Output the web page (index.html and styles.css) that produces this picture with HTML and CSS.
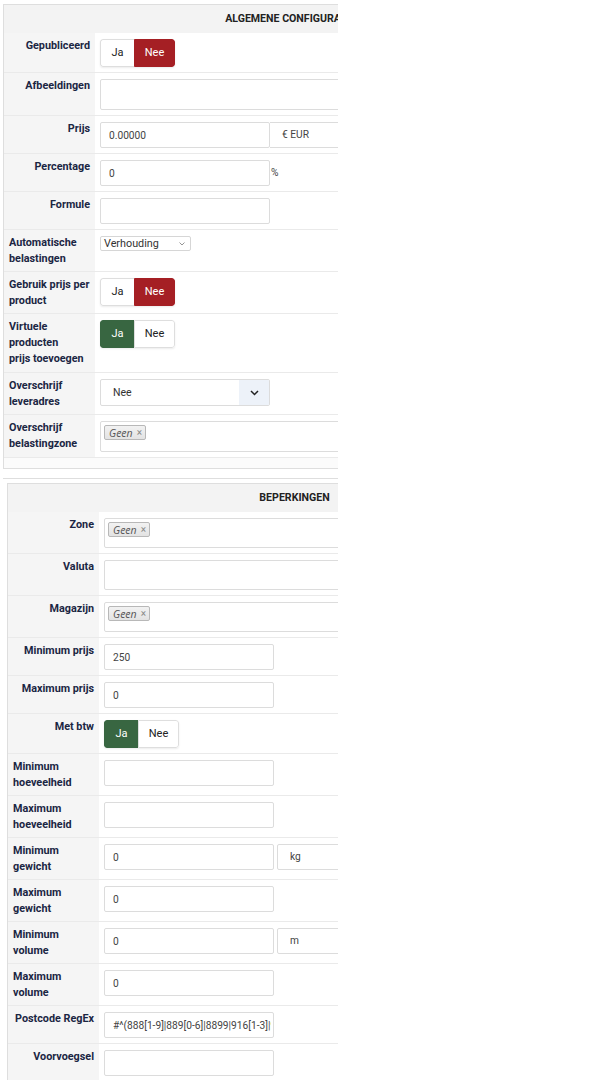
FILE: index.html
```html
<!DOCTYPE html>
<html lang="nl">
  <head>
    <meta charset="UTF-8" />
    <meta name="viewport" content="width=device-width, initial-scale=1.0" />
    <title>Verzendmethode bewerken</title>
    <link rel="stylesheet" href="styles.css">
  </head>
  <body>
    <div class="frame">
      <!-- Algemene configuratie -->
      <div class="panel panel-main">
        <div class="panel-title">Algemene configuratie</div>

        <div class="row">
          <div class="key"><label>Gepubliceerd</label></div>
          <div class="value">
            <div class="toggle">
              <span class="opt opt-ja">Ja</span>
              <span class="opt opt-nee is-no">Nee</span>
            </div>
          </div>
        </div>

        <div class="row">
          <div class="key"><label>Afbeeldingen</label></div>
          <div class="value"><div class="box-wide"></div></div>
        </div>

        <div class="row">
          <div class="key"><label>Prijs</label></div>
          <div class="value">
            <input class="field" type="text" value="0.00000" />
            <span class="addon">€ EUR</span>
          </div>
        </div>

        <div class="row">
          <div class="key"><label>Percentage</label></div>
          <div class="value">
            <input class="field" type="text" value="0" />
            <span class="unit">%</span>
          </div>
        </div>

        <div class="row">
          <div class="key"><label>Formule</label></div>
          <div class="value"><input class="field" type="text" value="" /></div>
        </div>

        <div class="row">
          <div class="key"><label>Automatische belastingen</label></div>
          <div class="value">
            <div class="mini-select">
              <span>Verhouding</span>
              <svg width="6" height="4" viewBox="0 0 6 4"><path d="M0.5 0.5 L3 3 L5.5 0.5" fill="none" stroke="#888" stroke-width="0.9"/></svg>
            </div>
          </div>
        </div>

        <div class="row">
          <div class="key"><label>Gebruik prijs per product</label></div>
          <div class="value">
            <div class="toggle">
              <span class="opt opt-ja">Ja</span>
              <span class="opt opt-nee is-no">Nee</span>
            </div>
          </div>
        </div>

        <div class="row">
          <div class="key key-tall"><label>Virtuele producten prijs&nbsp;toevoegen</label></div>
          <div class="value">
            <div class="toggle">
              <span class="opt opt-ja is-yes">Ja</span>
              <span class="opt opt-nee">Nee</span>
            </div>
          </div>
        </div>

        <div class="row">
          <div class="key"><label>Overschrijf leveradres</label></div>
          <div class="value">
            <div class="select">
              <span class="select-text">Nee</span>
              <span class="select-arrow">
                <svg width="9" height="6" viewBox="0 0 9 6"><path d="M1 1 L4.5 4.5 L8 1" fill="none" stroke="#222" stroke-width="1.5"/></svg>
              </span>
            </div>
          </div>
        </div>

        <div class="row">
          <div class="key"><label>Overschrijf belastingzone</label></div>
          <div class="value">
            <div class="chosen"><span class="tag"><em>Geen</em><span class="x">×</span></span></div>
          </div>
        </div>
      </div>

      <!-- Beperkingen -->
      <div class="group">
        <div class="panel">
          <div class="panel-title">Beperkingen</div>

          <div class="row">
            <div class="key"><label>Zone</label></div>
            <div class="value">
              <div class="chosen"><span class="tag"><em>Geen</em><span class="x">×</span></span></div>
            </div>
          </div>

          <div class="row">
            <div class="key"><label>Valuta</label></div>
            <div class="value"><div class="box-wide"></div></div>
          </div>

          <div class="row">
            <div class="key"><label>Magazijn</label></div>
            <div class="value">
              <div class="chosen"><span class="tag"><em>Geen</em><span class="x">×</span></span></div>
            </div>
          </div>

          <div class="row">
            <div class="key"><label>Minimum prijs</label></div>
            <div class="value"><input class="field" type="text" value="250" /></div>
          </div>

          <div class="row">
            <div class="key"><label>Maximum prijs</label></div>
            <div class="value"><input class="field" type="text" value="0" /></div>
          </div>

          <div class="row">
            <div class="key"><label>Met btw</label></div>
            <div class="value">
              <div class="toggle">
                <span class="opt opt-ja is-yes">Ja</span>
                <span class="opt opt-nee">Nee</span>
              </div>
            </div>
          </div>

          <div class="row">
            <div class="key"><label>Minimum hoeveelheid</label></div>
            <div class="value"><input class="field" type="text" value="" /></div>
          </div>

          <div class="row">
            <div class="key"><label>Maximum hoeveelheid</label></div>
            <div class="value"><input class="field" type="text" value="" /></div>
          </div>

          <div class="row">
            <div class="key"><label>Minimum gewicht</label></div>
            <div class="value">
              <input class="field" type="text" value="0" />
              <span class="unit-box">kg</span>
            </div>
          </div>

          <div class="row">
            <div class="key"><label>Maximum gewicht</label></div>
            <div class="value"><input class="field" type="text" value="0" /></div>
          </div>

          <div class="row">
            <div class="key"><label>Minimum volume</label></div>
            <div class="value">
              <input class="field" type="text" value="0" />
              <span class="unit-box">m</span>
            </div>
          </div>

          <div class="row">
            <div class="key"><label>Maximum volume</label></div>
            <div class="value"><input class="field" type="text" value="0" /></div>
          </div>

          <div class="row">
            <div class="key"><label>Postcode RegEx</label></div>
            <div class="value">
              <input class="field" type="text" value="#^(888[1-9]|889[0-6]|8899|916[1-3]|9170|9171|9172)[0-9]{2}$#" />
            </div>
          </div>

          <div class="row">
            <div class="key"><label>Voorvoegsel</label></div>
            <div class="value"><input class="field" type="text" value="" /></div>
          </div>
        </div>
      </div>
    </div>
  </body>
</html>
```

FILE: styles.css
```css
* {
  box-sizing: border-box;
}

body {
  margin: 0;
  background: #ffffff;
  font-family: Roboto, "Liberation Sans", sans-serif;
  font-size: 10.5px;
  color: #333333;
}

.frame {
  width: 338px;
  overflow: hidden;
  padding-top: 4px;
}

.panel {
  width: 575px;
  border: 1px solid #dedede;
  background: #ffffff;
}

.panel-main {
  margin-left: 3px;
  padding-bottom: 10px;
  background: #fbfbfb;
}

.panel-title {
  height: 28px;
  line-height: 28px;
  background: #f3f3f3;
  text-align: center;
  font-size: 10.6px;
  font-weight: 700;
  text-transform: uppercase;
  color: #222222;
}

.row {
  display: flex;
  background: #ffffff;
  border-bottom: 1px solid #eaeaea;
}

.key {
  width: 91px;
  flex: none;
  padding: 5px 5px 4px;
  background: #f5f5f5;
  text-align: right;
}

.key-tall {
  padding-bottom: 5px;
}

.key label {
  display: inline-block;
  text-align: left;
  font-size: 10.8px;
  font-weight: 700;
  line-height: 16px;
  color: #1b2643;
}

.value {
  flex: 1;
  display: flex;
  align-items: flex-start;
  padding: 6px 5px 5px;
}

/* text inputs */
.field {
  width: 170px;
  height: 26px;
  flex: none;
  margin: 0;
  padding: 0 2px 0 8px;
  border: 1px solid #dcdcdc;
  border-radius: 2px;
  background: #ffffff;
  font-family: Roboto, "Liberation Sans", sans-serif;
  font-size: 10.2px;
  color: #444444;
  outline: none;
}

.box-wide {
  width: 470px;
  height: 31px;
  flex: none;
  border: 1px solid #dcdcdc;
  border-radius: 2px;
  background: #ffffff;
}

.addon {
  width: 90px;
  height: 26px;
  flex: none;
  padding-left: 12px;
  border: 1px solid #dcdcdc;
  border-left: 0;
  line-height: 24px;
  font-size: 10.2px;
  color: #444444;
}

.unit {
  margin-left: 1px;
  line-height: 26px;
  font-size: 10.2px;
  color: #444444;
}

.unit-box {
  width: 90px;
  height: 26px;
  flex: none;
  margin-left: 3px;
  padding-left: 12px;
  border: 1px solid #dcdcdc;
  border-radius: 2px;
  line-height: 24px;
  font-size: 10.2px;
  color: #444444;
}

/* ja / nee switch */
.toggle {
  display: flex;
  border-radius: 3px;
  overflow: hidden;
  box-shadow: 0 1px 2px rgba(0, 0, 0, 0.08);
}

.opt {
  height: 28px;
  line-height: 26px;
  text-align: center;
  font-size: 11px;
  color: #222222;
  background: #ffffff;
  border: 1px solid #dedede;
}

.opt-ja {
  width: 34px;
  border-right: 0;
  border-radius: 3px 0 0 3px;
}

.opt-nee {
  width: 41px;
  border-radius: 0 3px 3px 0;
}

.opt.is-no {
  background: #a51f24;
  border-color: #a51f24;
  color: #ffffff;
}

.opt.is-yes {
  background: #386641;
  border-color: #386641;
  color: #ffffff;
}

/* selects */
.mini-select {
  width: 91px;
  height: 15px;
  display: flex;
  align-items: center;
  justify-content: space-between;
  padding: 0 5px 0 3px;
  border: 1px solid #d6d6d6;
  border-radius: 2px;
  background: #ffffff;
  font-size: 10.8px;
  color: #333333;
}

.select {
  width: 170px;
  height: 27px;
  display: flex;
  border: 1px solid #dcdcdc;
  border-radius: 2px;
  background: #ffffff;
  overflow: hidden;
}

.select-text {
  flex: 1;
  padding-left: 12px;
  line-height: 25px;
  color: #333333;
}

.select-arrow {
  width: 30px;
  display: flex;
  align-items: center;
  justify-content: center;
  background: #edf2f9;
}

/* chosen multi select */
.chosen {
  width: 470px;
  height: 31px;
  flex: none;
  padding: 3px;
  border: 1px solid #dcdcdc;
  border-radius: 2px;
  background: #ffffff;
}

.tag {
  display: inline-flex;
  align-items: center;
  height: 15px;
  padding: 0 3px 0 4px;
  border: 1px solid #b8b8b8;
  border-radius: 2px;
  background: linear-gradient(#f2f2f2, #e3e3e3);
}

.tag em {
  font-family: "Open Sans", sans-serif;
  font-size: 10.5px;
  color: #555555;
}

.tag .x {
  margin-left: 4px;
  font-size: 10px;
  color: #8a8a8a;
}

/* beperkingen block */
.group {
  margin: 9px 0 0 3px;
  padding: 4px 0 0 4px;
  border-top: 1px solid #dedede;
}

.group .chosen,
.group .box-wide {
  height: 30px;
}
```
